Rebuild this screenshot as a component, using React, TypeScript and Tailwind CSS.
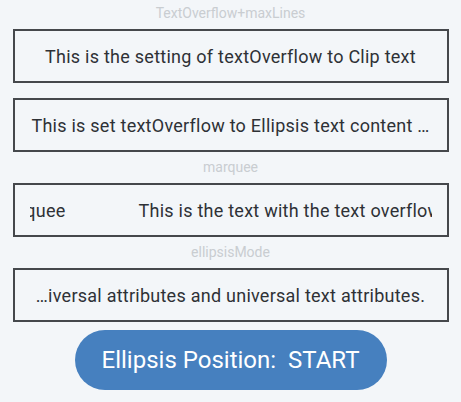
export default function App() {
  const box =
    'w-[436px] h-[54px] border-2 border-[#45484c] flex items-center overflow-hidden text-[18px] tracking-[0.25px] text-[#2e3136] whitespace-nowrap';
  const label = 'h-[15px] leading-[15px] text-[14px] text-[#c9cdd1]';

  return (
    <div
      className="w-[461px] h-[402px] bg-[#f3f6f9] flex flex-col items-center pt-[6px]"
      style={{ fontFamily: 'Roboto, "Noto Sans", sans-serif' }}
    >
      {/* TextOverflow + maxLines */}
      <div className={label}>TextOverflow+maxLines</div>
      <div className={`${box} mt-2 justify-center`}>
        <span>This is the setting of textOverflow to Clip text</span>
      </div>
      <div className={`${box} mt-[15px] justify-center`}>
        <span>This is set textOverflow to Ellipsis text content …</span>
      </div>

      {/* marquee */}
      <div className={`${label} mt-2`}>marquee</div>
      <div className={`${box} mt-2 px-[15px]`}>
        <div className="w-full overflow-hidden flex">
          <div className="w-[36px] shrink-0 overflow-hidden flex justify-end">
            <span className="shrink-0">set to marquee</span>
          </div>
          <span className="shrink-0 ml-[73px]">This is the text with the text overflow set to marquee</span>
        </div>
      </div>

      {/* ellipsisMode */}
      <div className={`${label} mt-2`}>ellipsisMode</div>
      <div className={`${box} mt-2 justify-center`}>
        <span>…iversal attributes and universal text attributes.</span>
      </div>

      <button className="mt-2 w-[312px] h-[60px] rounded-full bg-[#4680bf] text-white text-[24px] flex items-center justify-center">
        Ellipsis Position:&nbsp;&nbsp;START
      </button>
    </div>
  );
}
